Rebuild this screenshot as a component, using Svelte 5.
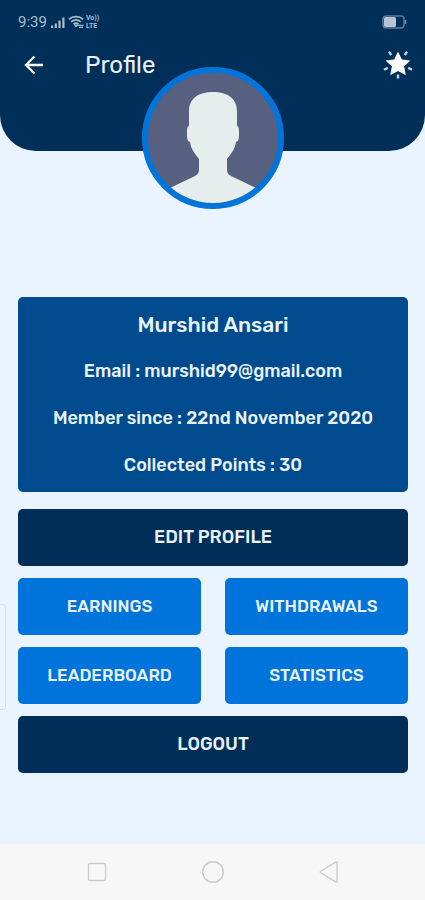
<script lang="ts">
  const user = {
    name: "Murshid Ansari",
    email: "murshid99@gmail.com",
    since: "22nd November 2020",
    points: 30,
  };

  const links = ["Earnings", "Withdrawals", "Leaderboard", "Statistics"];
</script>

<div class="screen">
  <header>
    <div class="status">
      <span class="time">9:39</span>
      <svg class="signal" width="14" height="12" viewBox="0 0 14 12" fill="currentColor">
        <path d="M0 9.5h2.2V12H0zM3.7 7.500h2.200V12H3.700zM7.400 4.500h2.200V12H7.400zM11.300 1.500h2.200V12h-2.200z" />
      </svg>
      <svg class="wifi" width="17" height="14" viewBox="0 0 17 14" fill="none" stroke="currentColor" stroke-width="1.7">
        <path d="M.8 4.4C4.8.8 11.2.8 15.2 4.4M3.2 6.8c3-2.4 6.6-2.4 9.6 0M5.5 9.2c1.6-1.4 3.4-1.4 5 0" />
        <path d="M6.8 10.2h2.4L8 11.6zM9.5 10.3h6M11 12.4h4" stroke-width="1.2" />
      </svg>
      <span class="volte"><span>Vo))</span><span>LTE</span></span>
      <svg class="battery" width="25" height="14" viewBox="0 0 25 14">
        <rect x="1" y="1" width="21" height="12" rx="3" fill="none" stroke="#5c7c99" stroke-width="1.4" />
        <rect x="2" y="2" width="12" height="10" rx="1.5" fill="#b6c4d3" />
        <path d="M23.5 5v4" stroke="#7890a8" stroke-width="1.5" />
      </svg>
    </div>

    <div class="toolbar">
      <button class="icon" aria-label="Back">
        <svg width="20" height="20" viewBox="0 0 20 20" fill="none" stroke="#fff" stroke-width="2.3">
          <path d="M19 10H2.5M10.5 1.5 2 10l8.5 8.5" />
        </svg>
      </button>
      <h1>Profile</h1>
      <button class="icon" aria-label="Rewards">
        <svg width="30" height="30" viewBox="0 0 30 30">
          <path
            d="m15 2.5 3.5 7.4 8 1-5.9 5.5 1.6 8L15 20.5l-7.2 3.9 1.6-8-5.9-5.500 8-1z"
            fill="#fff"
            stroke="#fff"
            stroke-linejoin="round"
          />
          <path
            d="m6 1.800 2.200 3.200M24 1.800 21.800 5M1 19.800l3.800-1.900M29 19.800l-3.800-1.900M15 24.500v4"
            stroke="#c3d3e2"
            stroke-width="2.4"
          />
        </svg>
      </button>
    </div>
  </header>

  <main>
    <div class="avatar">
      <svg viewBox="0 0 130 130" role="img" aria-label="Profile photo">
        <path
          fill="#e6eeed"
          d="M41 53V38c0-12 9-19 24-19s24 7 24 19v15c2 0 2 3 2 7 0 5 0 8-3 9-1 7-5 12-9 17v10c0 4 1 5 4 7l23 11c5 3 8 5 11 9v7H13v-7c3-4 6-6 11-9l23-11c3-2 4-3 4-7V86c-4-5-8-10-9-17-3-1-3-4-3-9 0-4 0-7 2-7z"
        />
      </svg>
    </div>

    <section class="card">
      <h2>{user.name}</h2>
      <p>Email : {user.email}</p>
      <p>Member since : {user.since}</p>
      <p>Collected Points : {user.points}</p>
    </section>

    <div class="actions">
      <button class="dark">Edit Profile</button>
      {#each links as link}
        <button>{link}</button>
      {/each}
      <button class="dark">Logout</button>
    </div>

    <div class="edge-handle"></div>
  </main>

  <nav>
    <button aria-label="Recent apps">
      <svg width="24" height="24" viewBox="0 0 24 24"><rect x="3.5" y="3.5" width="17" height="17" rx="1.5" /></svg>
    </button>
    <button aria-label="Home">
      <svg width="24" height="24" viewBox="0 0 24 24"><circle cx="12" cy="12" r="10.3" /></svg>
    </button>
    <button aria-label="Go back">
      <svg width="24" height="24" viewBox="0 0 24 24"><path d="M20 2.7v18.6q0 1.2-1.2.6L4 13q-1.5-1 0-2L18.8 2.1q1.2-.6 1.2.6z" /></svg>
    </button>
  </nav>
</div>

<style>
  :global(body) {
    margin: 0;
    background: #e9f4ff;
  }

  .screen {
    display: flex;
    flex-direction: column;
    min-height: 100vh;
    font-family: Rubik, Roboto, "Liberation Sans", sans-serif;
    color: #e9f3fc;
  }

  button {
    padding: 0;
    border: none;
    background: none;
    font: inherit;
    color: inherit;
    cursor: pointer;
  }

  svg {
    display: block;
  }

  header {
    box-sizing: border-box;
    height: 151px;
    padding-top: 12px;
    border-radius: 0 0 36px 36px;
    background: #002f5a;
  }

  .status {
    display: flex;
    align-items: center;
    height: 20px;
    padding: 0 18px;
    color: #a9bccd;
  }

  .time {
    margin-right: 4px;
    font-family: Roboto, sans-serif;
    font-size: 15px;
  }

  .signal {
    margin-right: 3px;
  }

  .volte {
    display: flex;
    flex-direction: column;
    margin-left: 1px;
    font-family: Roboto, sans-serif;
    font-size: 7px;
    font-weight: 700;
    line-height: 8px;
  }

  .battery {
    margin-left: auto;
  }

  .toolbar {
    display: flex;
    align-items: center;
    height: 66px;
    padding: 0 12px 0 24px;
  }

  .icon {
    flex: none;
  }

  h1 {
    flex: 1;
    margin: 0 0 0 41px;
    font-size: 24px;
    font-weight: 400;
    line-height: 28px;
  }

  main {
    position: relative;
    flex: 1;
    padding: 0 17px 24px 18px;
  }

  .avatar {
    box-sizing: border-box;
    width: 142px;
    height: 142px;
    margin: -84px auto 88px;
    overflow: hidden;
    border: 6px solid #0374da;
    border-radius: 50%;
    background: #57607f;
  }

  .card {
    padding: 4px 12px 3px;
    border-radius: 5px;
    background: #004b8d;
    text-align: center;
  }

  .card h2,
  .card p {
    margin: 0;
    font-size: 18px;
    font-weight: 500;
    line-height: 47px;
  }

  .card h2 {
    font-size: 21px;
  }

  .actions {
    display: grid;
    grid-template-columns: 1fr 1fr;
    gap: 12px 24px;
    margin-top: 17px;
  }

  .actions button {
    height: 57px;
    padding-bottom: 2px;
    border-radius: 5px;
    background: #0074da;
    font-size: 17px;
    font-weight: 500;
    text-transform: uppercase;
  }

  .actions .dark {
    grid-column: 1 / -1;
    background: #002e58;
    font-size: 18px;
  }

  /* sidebar pull tab peeking in from the left edge */
  .edge-handle {
    position: absolute;
    left: 0;
    bottom: 134px;
    box-sizing: border-box;
    width: 6px;
    height: 106px;
    border: 1px solid #d5e0ea;
    border-left: none;
    border-radius: 0 4px 4px 0;
    background: #edf6ff;
  }

  nav {
    display: flex;
    justify-content: center;
    gap: 92px;
    height: 56px;
    background: #f7f7f7;
  }

  nav svg {
    fill: none;
    stroke: #cbcbcb;
    stroke-width: 1.4;
  }
</style>
